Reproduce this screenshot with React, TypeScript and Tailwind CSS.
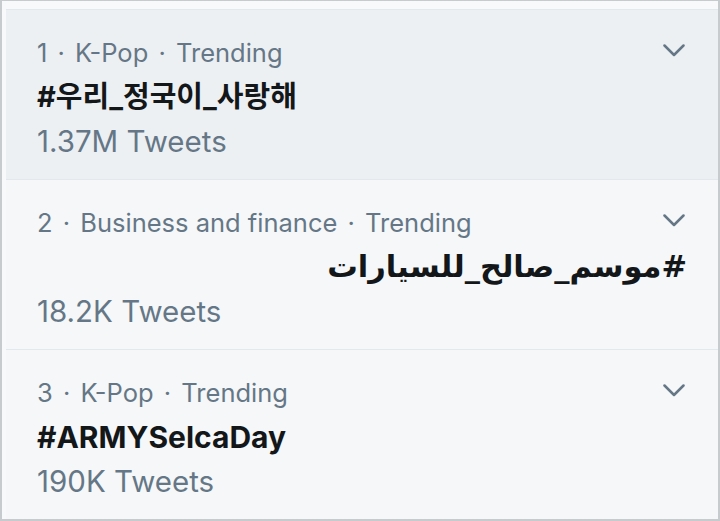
import React from "react";

type Trend = { meta: string[]; title: string; count: string; kind: "ko" | "ar" | "en"; hover?: boolean };

const trends: Trend[] = [
  { meta: ["1", "K-Pop", "Trending"], title: "#우리_정국이_사랑해", count: "1.37M Tweets", kind: "ko", hover: true },
  { meta: ["2", "Business and finance", "Trending"], title: "#موسم_صالح_للسيارات", count: "18.2K Tweets", kind: "ar" },
  { meta: ["3", "K-Pop", "Trending"], title: "#ARMYSelcaDay", count: "190K Tweets", kind: "en" },
];

function Chevron() {
  return (
    <svg width="22" height="13" viewBox="0 0 22 13" className="shrink-0">
      <path d="M1.5 1.5 L11 11 L20.5 1.5" fill="none" stroke="#657786" strokeWidth="2.5" strokeLinecap="round" strokeLinejoin="round" />
    </svg>
  );
}

function Row({ t }: { t: Trend }) {
  const titleCls =
    t.kind === "ar"
      ? "text-[30.5px] leading-[44px] font-bold text-[#14171a] text-start"
      : t.kind === "ko"
      ? "text-[29px] leading-[44px] font-bold text-[#14171a] text-start"
      : "text-[30px] leading-[44px] font-bold text-[#14171a] text-start";
  return (
    <div
      className={`h-[170px] border-t border-[#e3e8ec] pl-[31px] pr-[31px] pt-[21px] ${
        t.hover ? "bg-[#edf0f3]" : "bg-[#f5f7f9]"
      }`}
    >
      <div className="flex items-start justify-between">
        <div className="text-[25.5px] leading-[44px] text-[#657786]">
          {t.meta.map((m, i) => (
            <React.Fragment key={i}>
              {i > 0 && <span className="mx-[3px]"> · </span>}
              {m}
            </React.Fragment>
          ))}
        </div>
        <div className="pt-[13px] mr-[2px]">
          <Chevron />
        </div>
      </div>
      <div
        dir={t.kind === "ar" ? "rtl" : "ltr"}
        className={titleCls}
        style={{ fontFamily: t.kind === "ar" ? "'DejaVu Sans', sans-serif" : undefined }}
      >
        {t.title}
      </div>
      <div className="text-[29.5px] leading-[44px] text-[#657786]">{t.count}</div>
    </div>
  );
}

export default function App() {
  return (
    <div
      className="w-[720px] h-[521px] overflow-hidden bg-[#f7f9fa] border-t border-l-2 border-r-2 border-b-2 border-[#c8cbce] pl-[4px] pt-[8px]"
      style={{ fontFamily: "Inter, 'Noto Sans CJK KR', sans-serif" }}
    >
      <div className="flex flex-col">
        {trends.map((t, i) => (
          <Row key={i} t={t} />
        ))}
      </div>
    </div>
  );
}
